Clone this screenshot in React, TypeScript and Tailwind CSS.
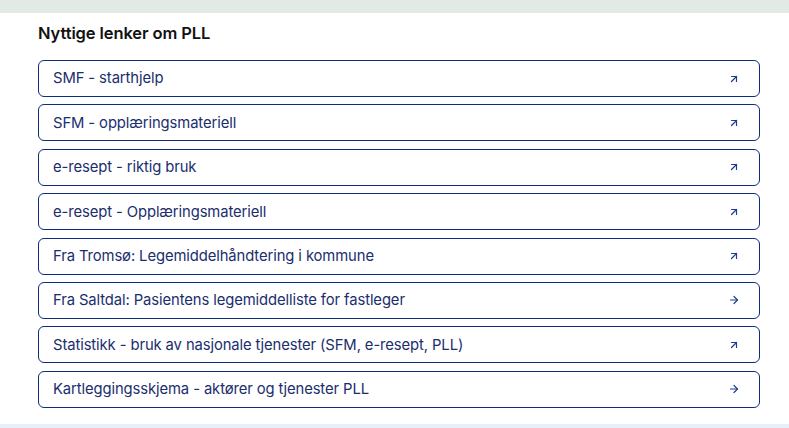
import React from 'react';
import { ArrowUpRight, ArrowRight } from 'lucide-react';

interface LinkItem {
  label: string;
  external: boolean;
}

const links: LinkItem[] = [
  { label: 'SMF - starthjelp', external: true },
  { label: 'SFM - opplæringsmateriell', external: true },
  { label: 'e-resept - riktig bruk', external: true },
  { label: 'e-resept - Opplæringsmateriell', external: true },
  { label: 'Fra Tromsø: Legemiddelhåndtering i kommune', external: true },
  { label: 'Fra Saltdal: Pasientens legemiddelliste for fastleger', external: false },
  { label: 'Statistikk - bruk av nasjonale tjenester (SFM, e-resept, PLL)', external: true },
  { label: 'Kartleggingsskjema - aktører og tjenester PLL', external: false },
];

const App = () => {
  return (
    <div className="w-[789px] h-[428px] bg-white flex flex-col font-['Inter',sans-serif] overflow-hidden">
      <div className="h-[13px] bg-[#e1eae5] shrink-0" />
      <div className="flex-1 px-[38px] pt-[10px]">
        <h2 className="text-[16.5px] leading-[20px] font-semibold text-[#111111] tracking-[-0.1px]">Nyttige lenker om PLL</h2>
        <ul className="mt-[17px] w-[722px] flex flex-col gap-[7.4px]">
          {links.map((link) => (
            <li key={link.label}>
              <a
                href="#"
                className="h-[37px] flex items-center justify-between pl-[14px] pr-[19px] border border-[#0b2d7c] rounded-[6px] text-[#1b2e6e] text-[14.8px] tracking-[-0.1px]"
              >
                <span>{link.label}</span>
                {link.external ? (
                  <ArrowUpRight size={12} strokeWidth={2.4} className="text-[#1f3d8f]" />
                ) : (
                  <ArrowRight size={12} strokeWidth={2.4} className="text-[#1f3d8f]" />
                )}
              </a>
            </li>
          ))}
        </ul>
      </div>
      <div className="h-[4px] bg-[#e7f0fa] shrink-0" />
    </div>
  );
};

export default App;
